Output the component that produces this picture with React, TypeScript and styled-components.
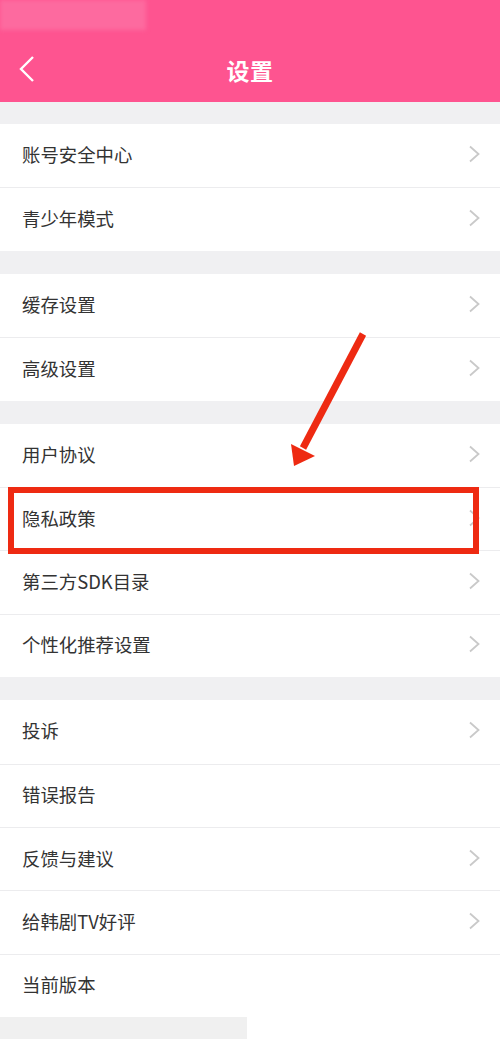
import React from "react";
import styled, { createGlobalStyle } from "styled-components";

const GlobalStyle = createGlobalStyle`
  html, body {
    margin: 0;
    padding: 0;
    background: #f0f0f2;
  }
  body {
    font-family: "Noto Sans CJK SC", "Noto Sans", sans-serif;
  }
`;

interface IRow {
  title: string;
  arrow?: boolean;
}

const groups: IRow[][] = [
  [{ title: "账号安全中心", arrow: true }, { title: "青少年模式", arrow: true }],
  [{ title: "缓存设置", arrow: true }, { title: "高级设置", arrow: true }],
  [
    { title: "用户协议", arrow: true },
    { title: "隐私政策", arrow: true },
    { title: "第三方SDK目录", arrow: true },
    { title: "个性化推荐设置", arrow: true },
  ],
  [
    { title: "投诉", arrow: true },
    { title: "错误报告" },
    { title: "反馈与建议", arrow: true },
    { title: "给韩剧TV好评", arrow: true },
    { title: "当前版本" },
  ],
];

const Chevron = () => (
  <svg width="13" height="18" viewBox="0 0 13 18">
    <path d="M2 1.5 L10.5 9 L2 16.5" fill="none" stroke="#c9c9c9" strokeWidth="1.8" />
  </svg>
);

const SettingRow = ({ title, arrow }: IRow) => (
  <Row>
    <RowTitle>{title}</RowTitle>
    {arrow && <Chevron />}
  </Row>
);

const App = () => {
  return (
    <Page>
      <GlobalStyle />
      <Header>
        <StatusBlur />
        <NavBar>
          <BackButton>
            <svg width="18" height="28" viewBox="0 0 18 28">
              <path d="M15 2 L3 14 L15 26" fill="none" stroke="#fff" strokeWidth="2.4" />
            </svg>
          </BackButton>
          <Title>设置</Title>
        </NavBar>
      </Header>
      <List>
        {groups.map((group, gi) => (
          <Group key={gi}>
            {group.map((row) => (
              <SettingRow key={row.title} {...row} />
            ))}
          </Group>
        ))}
      </List>
      <Footer>
        <FooterGrey />
      </Footer>
      <Highlight />
      <Pointer width="80" height="140" viewBox="0 0 80 140">
        <line x1="72" y1="4" x2="12" y2="118" stroke="#ee2a12" strokeWidth="7" />
        <polygon points="3,136 0,114 24,126" fill="#ee2a12" />
      </Pointer>
    </Page>
  );
};

export default App;

const Page = styled.div`
  position: relative;
  width: 500px;
  height: 1039px;
  overflow: hidden;
  background: #f0f0f2;
`;

const Header = styled.div`
  position: relative;
  height: 102px;
  background: #fe5490;
`;

const StatusBlur = styled.div`
  position: absolute;
  left: 0;
  top: 0;
  width: 146px;
  height: 30px;
  background: #fd6a9f;
  filter: blur(2px);
`;

const NavBar = styled.div`
  position: relative;
  display: flex;
  align-items: center;
  justify-content: center;
  height: 60px;
  padding-top: 40px;
`;

const BackButton = styled.div`
  position: absolute;
  left: 18px;
  top: 55px;
  display: flex;
`;

const Title = styled.h1`
  margin: 0;
  color: #ffffff;
  font-size: 23px;
  font-weight: 700;
  letter-spacing: 0.5px;
`;

const List = styled.div`
  display: flex;
  flex-direction: column;
  gap: 23px;
  padding-top: 22px;
`;

const Group = styled.div`
  background: #ffffff;
`;

const Row = styled.div`
  box-sizing: border-box;
  display: flex;
  align-items: center;
  justify-content: space-between;
  height: 63.4px;
  padding: 0 19px 3px 22px;
  & + & {
    border-top: 1.5px solid #ececee;
  }
`;

const RowTitle = styled.span`
  font-size: 18.4px;
  color: #333333;
`;

const Footer = styled.div`
  display: flex;
  height: 24px;
  background: #ffffff;
`;

const FooterGrey = styled.div`
  width: 247px;
  background: #f0f0f0;
`;

const Highlight = styled.div`
  position: absolute;
  left: 8px;
  top: 487px;
  width: 471px;
  height: 67px;
  box-sizing: border-box;
  border: 6.5px solid #ee2a12;
`;

const Pointer = styled.svg`
  position: absolute;
  left: 291px;
  top: 330px;
`;
